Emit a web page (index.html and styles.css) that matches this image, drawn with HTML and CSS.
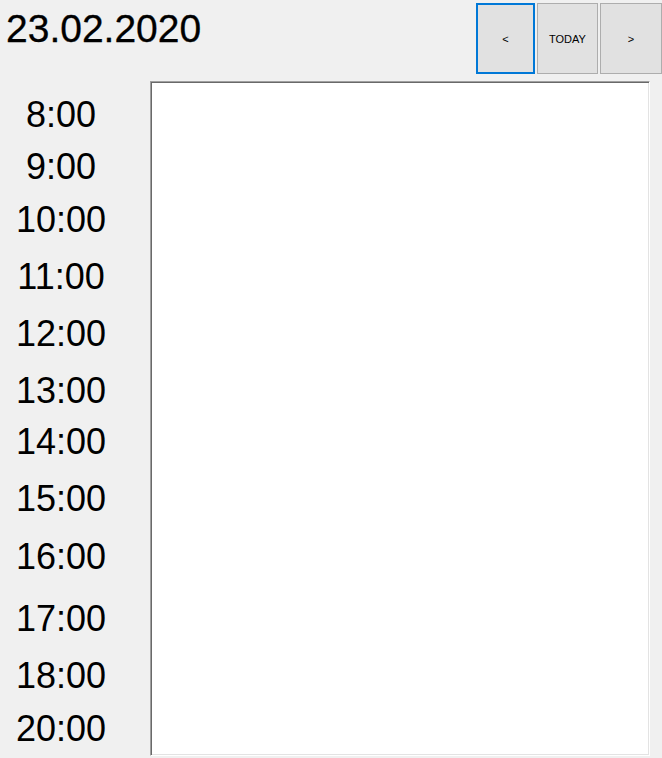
FILE: index.html
```html
<!DOCTYPE html>
<html>
<head>
<meta charset="utf-8">
<link rel="stylesheet" href="styles.css">
</head>
<body>
<div class="app">
  <div class="header">
    <div class="date">23.02.2020</div>
    <div class="nav">
      <button class="btn btn-prev btn-focused">&lt;</button>
      <button class="btn btn-today">TODAY</button>
      <button class="btn btn-next">&gt;</button>
    </div>
  </div>
  <div class="main">
    <div class="times">
      <div class="time">8:00</div>
      <div class="time">9:00</div>
      <div class="time">10:00</div>
      <div class="time">11:00</div>
      <div class="time">12:00</div>
      <div class="time">13:00</div>
      <div class="time">14:00</div>
      <div class="time">15:00</div>
      <div class="time">16:00</div>
      <div class="time">17:00</div>
      <div class="time">18:00</div>
      <div class="time">20:00</div>
    </div>
    <div class="panel"></div>
  </div>
</div>
</body>
</html>
```
FILE: styles.css
```css
html, body {
  margin: 0;
  padding: 0;
}
body {
  background: #f0f0f0;
  font-family: "Liberation Sans", Arial, sans-serif;
  color: #000;
  width: 662px;
  height: 758px;
  overflow: hidden;
}
.app {
  display: flex;
  flex-direction: column;
}
.header {
  display: flex;
  height: 81px;
}
.date {
  font-size: 39px;
  line-height: 45px;
  padding: 6px 0 0 6px;
  -webkit-text-stroke: 0.3px #000;
}
.nav {
  margin-left: auto;
  width: 186px;
  display: flex;
  gap: 2px;
  padding-top: 3px;
  align-items: flex-start;
}
.btn {
  height: 71px;
  margin: 0;
  padding: 0;
  background: #e1e1e1;
  border: 1px solid #adadad;
  font-family: "Liberation Sans", Arial, sans-serif;
  font-size: 11px;
  color: #000;
  box-sizing: border-box;
}
.btn-prev {
  width: 59px;
}
.btn-today {
  width: 61px;
}
.btn-next {
  flex: 1;
}
.btn-focused {
  border: 2px solid #0078d7;
}
.main {
  display: flex;
  gap: 28px;
}
.times {
  width: 122px;
  padding-top: 13px;
  display: grid;
  grid-template-rows: 52px 53px 57px 57px 57px 51px 57px 58px 62px 57px 53px auto;
  align-content: start;
}
.time {
  font-size: 36px;
  line-height: 41px;
  text-align: center;
  align-self: start;
}
.panel {
  width: 500px;
  height: 675px;
  box-sizing: border-box;
  background: #fff;
  border: 1px solid;
  border-color: #a0a0a0 #fff #fff #a0a0a0;
  box-shadow: inset 1px 1px 0 #696969, inset -1px -1px 0 #e3e3e3;
}
```
